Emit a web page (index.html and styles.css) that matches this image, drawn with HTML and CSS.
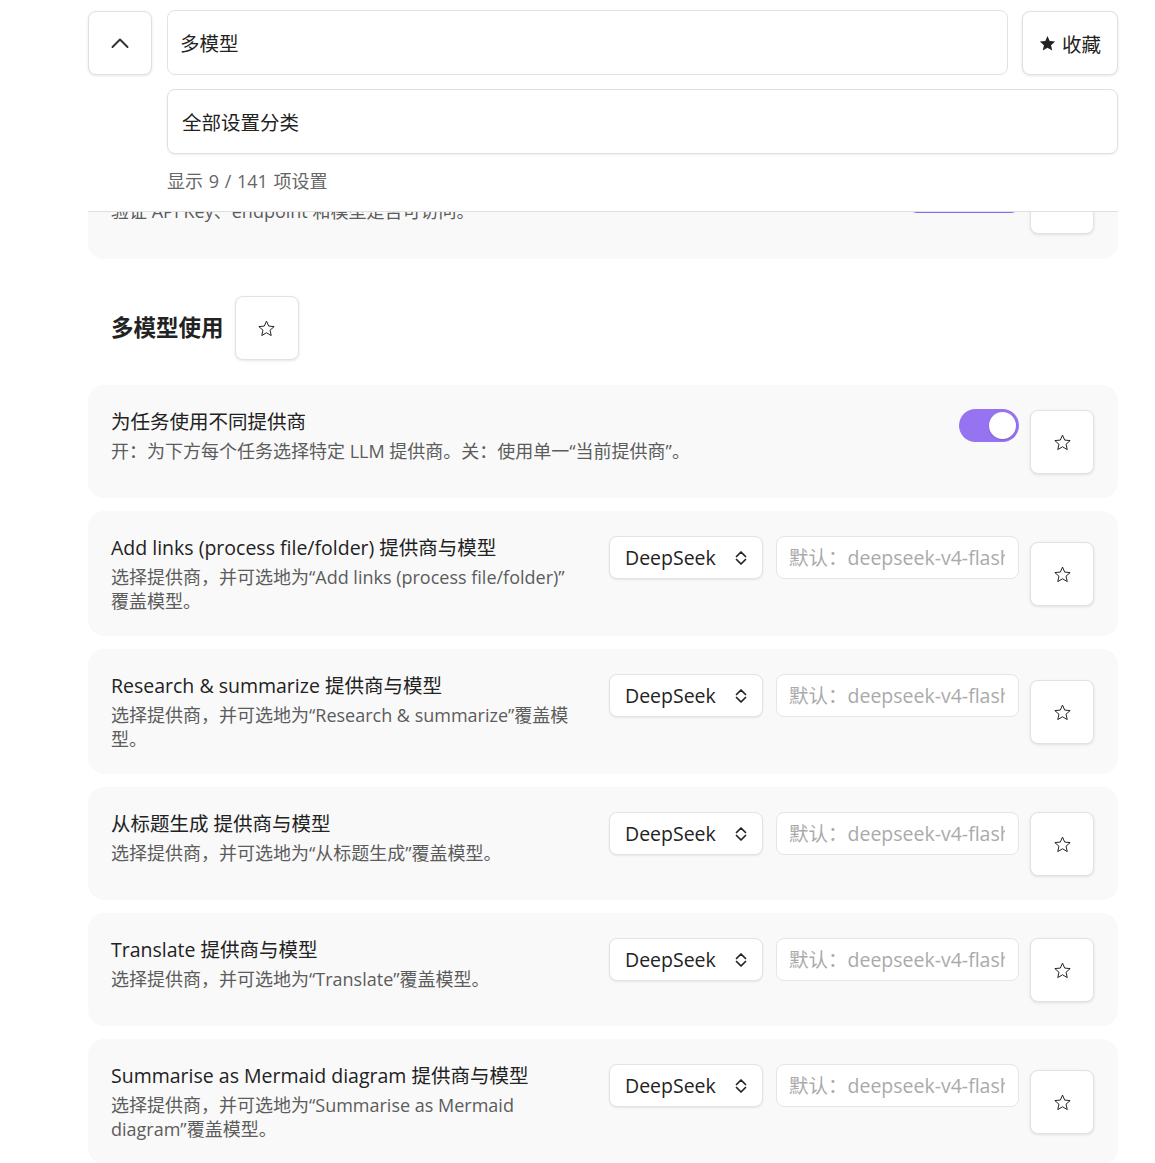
FILE: index.html
```html
<!DOCTYPE html>
<html lang="zh-CN">
<head>
  <meta charset="UTF-8">
  <title>设置</title>
  <link rel="stylesheet" href="styles.css">
</head>
<body>
  <div class="page">

    <div class="search-bar">
      <div class="search-row">
        <button class="up-btn">
          <svg width="24" height="24" viewBox="0 0 24 24"><path d="M4.5 16 L12 8.5 L19.5 16" fill="none" stroke="#333" stroke-width="2" stroke-linecap="round" stroke-linejoin="round"/></svg>
        </button>
        <input class="search-input" type="text" value="多模型">
        <button class="fav-btn">
          <svg width="17" height="17" viewBox="0 0 24 24"><polygon points="12,1.5 15.1,8.6 22.8,9.3 17,14.4 18.7,22 12,18 5.3,22 7,14.4 1.2,9.3 8.9,8.6" fill="#222"/></svg>
          <span>收藏</span>
        </button>
      </div>
      <div class="category">全部设置分类</div>
      <div class="count">显示 9 / 141 项设置</div>
    </div>

    <!-- fila mig amagada sota la barra -->
    <div class="setting hidden-row">
      <div class="info">
        <div class="name">测试连接</div>
        <div class="desc">验证 API Key、endpoint 和模型是否可访问。</div>
      </div>
      <div class="controls">
        <button class="cta">测试连接</button>
      </div>
      <button class="star-btn"><svg width="17" height="17" viewBox="0 0 24 24"><polygon points="12,1.5 15.1,8.6 22.8,9.3 17,14.4 18.7,22 12,18 5.3,22 7,14.4 1.2,9.3 8.9,8.6" fill="none" stroke="#222" stroke-width="1.4" stroke-linejoin="round"/></svg></button>
    </div>

    <div class="section-heading">
      <h2>多模型使用</h2>
      <button class="star-btn"><svg width="17" height="17" viewBox="0 0 24 24"><polygon points="12,1.5 15.1,8.6 22.8,9.3 17,14.4 18.7,22 12,18 5.3,22 7,14.4 1.2,9.3 8.9,8.6" fill="none" stroke="#222" stroke-width="1.4" stroke-linejoin="round"/></svg></button>
    </div>

    <div class="setting">
      <div class="info">
        <div class="name">为任务使用不同提供商</div>
        <div class="desc">开：为下方每个任务选择特定 LLM 提供商。关：使用单一“当前提供商”。</div>
      </div>
      <div class="controls toggle-wrap">
        <div class="toggle on"><div class="knob"></div></div>
      </div>
      <button class="star-btn"><svg width="17" height="17" viewBox="0 0 24 24"><polygon points="12,1.5 15.1,8.6 22.8,9.3 17,14.4 18.7,22 12,18 5.3,22 7,14.4 1.2,9.3 8.9,8.6" fill="none" stroke="#222" stroke-width="1.4" stroke-linejoin="round"/></svg></button>
    </div>

    <div class="setting">
      <div class="info">
        <div class="name">Add links (process file/folder) 提供商与模型</div>
        <div class="desc">选择提供商，并可选地为“Add links (process file/folder)”覆盖模型。</div>
      </div>
      <div class="controls">
        <div class="dropdown"><span>DeepSeek</span><svg width="12" height="16" viewBox="0 0 12 16"><path d="M1.5 6.5 L6 2 L10.5 6.5 M1.5 9.5 L6 14 L10.5 9.5" fill="none" stroke="#222" stroke-width="1.7" stroke-linecap="round" stroke-linejoin="round"/></svg></div>
        <input class="model-input" type="text" placeholder="默认：deepseek-v4-flash">
      </div>
      <button class="star-btn"><svg width="17" height="17" viewBox="0 0 24 24"><polygon points="12,1.5 15.1,8.6 22.8,9.3 17,14.4 18.7,22 12,18 5.3,22 7,14.4 1.2,9.3 8.9,8.6" fill="none" stroke="#222" stroke-width="1.4" stroke-linejoin="round"/></svg></button>
    </div>

    <div class="setting">
      <div class="info">
        <div class="name">Research &amp; summarize 提供商与模型</div>
        <div class="desc">选择提供商，并可选地为“Research &amp; summarize”覆盖模型。</div>
      </div>
      <div class="controls">
        <div class="dropdown"><span>DeepSeek</span><svg width="12" height="16" viewBox="0 0 12 16"><path d="M1.5 6.5 L6 2 L10.5 6.5 M1.5 9.5 L6 14 L10.5 9.5" fill="none" stroke="#222" stroke-width="1.7" stroke-linecap="round" stroke-linejoin="round"/></svg></div>
        <input class="model-input" type="text" placeholder="默认：deepseek-v4-flash">
      </div>
      <button class="star-btn"><svg width="17" height="17" viewBox="0 0 24 24"><polygon points="12,1.5 15.1,8.6 22.8,9.3 17,14.4 18.7,22 12,18 5.3,22 7,14.4 1.2,9.3 8.9,8.6" fill="none" stroke="#222" stroke-width="1.4" stroke-linejoin="round"/></svg></button>
    </div>

    <div class="setting">
      <div class="info">
        <div class="name">从标题生成 提供商与模型</div>
        <div class="desc">选择提供商，并可选地为“从标题生成”覆盖模型。</div>
      </div>
      <div class="controls">
        <div class="dropdown"><span>DeepSeek</span><svg width="12" height="16" viewBox="0 0 12 16"><path d="M1.5 6.5 L6 2 L10.5 6.5 M1.5 9.5 L6 14 L10.5 9.5" fill="none" stroke="#222" stroke-width="1.7" stroke-linecap="round" stroke-linejoin="round"/></svg></div>
        <input class="model-input" type="text" placeholder="默认：deepseek-v4-flash">
      </div>
      <button class="star-btn"><svg width="17" height="17" viewBox="0 0 24 24"><polygon points="12,1.5 15.1,8.6 22.8,9.3 17,14.4 18.7,22 12,18 5.3,22 7,14.4 1.2,9.3 8.9,8.6" fill="none" stroke="#222" stroke-width="1.4" stroke-linejoin="round"/></svg></button>
    </div>

    <div class="setting">
      <div class="info">
        <div class="name">Translate 提供商与模型</div>
        <div class="desc">选择提供商，并可选地为“Translate”覆盖模型。</div>
      </div>
      <div class="controls">
        <div class="dropdown"><span>DeepSeek</span><svg width="12" height="16" viewBox="0 0 12 16"><path d="M1.5 6.5 L6 2 L10.5 6.5 M1.5 9.5 L6 14 L10.5 9.5" fill="none" stroke="#222" stroke-width="1.7" stroke-linecap="round" stroke-linejoin="round"/></svg></div>
        <input class="model-input" type="text" placeholder="默认：deepseek-v4-flash">
      </div>
      <button class="star-btn"><svg width="17" height="17" viewBox="0 0 24 24"><polygon points="12,1.5 15.1,8.6 22.8,9.3 17,14.4 18.7,22 12,18 5.3,22 7,14.4 1.2,9.3 8.9,8.6" fill="none" stroke="#222" stroke-width="1.4" stroke-linejoin="round"/></svg></button>
    </div>

    <div class="setting">
      <div class="info">
        <div class="name">Summarise as Mermaid diagram 提供商与模型</div>
        <div class="desc">选择提供商，并可选地为“Summarise as Mermaid diagram”覆盖模型。</div>
      </div>
      <div class="controls">
        <div class="dropdown"><span>DeepSeek</span><svg width="12" height="16" viewBox="0 0 12 16"><path d="M1.5 6.5 L6 2 L10.5 6.5 M1.5 9.5 L6 14 L10.5 9.5" fill="none" stroke="#222" stroke-width="1.7" stroke-linecap="round" stroke-linejoin="round"/></svg></div>
        <input class="model-input" type="text" placeholder="默认：deepseek-v4-flash">
      </div>
      <button class="star-btn"><svg width="17" height="17" viewBox="0 0 24 24"><polygon points="12,1.5 15.1,8.6 22.8,9.3 17,14.4 18.7,22 12,18 5.3,22 7,14.4 1.2,9.3 8.9,8.6" fill="none" stroke="#222" stroke-width="1.4" stroke-linejoin="round"/></svg></button>
    </div>

  </div>
</body>
</html>
```

FILE: styles.css
```css
body {
  margin: 0;
  background: #fff;
  color: #222;
  font-family: "Open Sans", "Noto Sans CJK SC", sans-serif;
}
.page {
  width: 1030px;
  margin-left: 88px;
}
button, input {
  font-family: inherit;
  color: inherit;
}

/* --------------- Barra de cerca ----------------- */

.search-bar {
  position: relative;
  z-index: 2;
  background: #fff;
  border-bottom: 1px solid #e0e0e0;
  padding: 10px 0 18px;
}
.search-row {
  display: flex;
  align-items: center;
  gap: 14px;
  height: 65px;
}
.up-btn {
  width: 64px;
  height: 64px;
  margin-right: 1px;
  margin-top: 1px;
  display: flex;
  align-items: center;
  justify-content: center;
  background: #fff;
  border: 1px solid #e0e0e0;
  border-radius: 8px;
  box-shadow: 0 1px 3px rgba(0,0,0,0.1);
}
.search-input {
  flex: 1;
  min-width: 0;
  height: 65px;
  box-sizing: border-box;
  padding: 0 12px;
  font-size: 19.5px;
  border: 1px solid #e2e2e2;
  border-radius: 8px;
  outline: none;
}
.fav-btn {
  width: 96px;
  height: 64px;
  margin-top: 1px;
  display: flex;
  align-items: center;
  justify-content: center;
  gap: 6px;
  font-size: 19.5px;
  background: #fff;
  border: 1px solid #e0e0e0;
  border-radius: 8px;
  box-shadow: 0 1px 3px rgba(0,0,0,0.1);
}
.category {
  margin: 14px 0 0 79px;
  height: 65px;
  box-sizing: border-box;
  padding: 0 14px;
  display: flex;
  align-items: center;
  font-size: 19.5px;
  border: 1px solid #e0e0e0;
  border-radius: 8px;
  box-shadow: 0 1px 2px rgba(0,0,0,0.08);
}
.count {
  margin: 15px 0 0 79px;
  font-size: 18px;
  line-height: 24px;
  color: #666;
  word-spacing: 1px;
}

/* --------------- Files ----------------- */

.setting {
  display: flex;
  align-items: flex-start;
  background: #f9f9f9;
  border-radius: 16px;
  padding: 24px 24px 23px 23px;
}
.setting + .setting {
  margin-top: 13px;
}
.hidden-row {
  margin-top: -67px;
  padding-bottom: 24px;
}
.info {
  flex: 1;
  min-width: 0;
  padding-right: 34px;
}
.name {
  font-size: 19.5px;
  line-height: 26px;
  color: #222;
}
.desc {
  margin-top: 4px;
  font-size: 18px;
  line-height: 24px;
  color: #5c5c5c;
}
.controls {
  display: flex;
  align-items: flex-start;
  gap: 13px;
  padding-top: 1px;
}
.toggle-wrap {
  padding-top: 0;
}
.star-btn {
  align-self: center;
  flex: none;
  width: 64px;
  height: 64px;
  margin: 1px 0 1px 11px;
  display: flex;
  align-items: center;
  justify-content: center;
  background: #fff;
  border: 1px solid #e2e2e2;
  border-radius: 8px;
  box-shadow: 0 1px 3px rgba(0,0,0,0.1);
}

.section-heading {
  display: flex;
  align-items: center;
  gap: 11px;
  padding-left: 23px;
  margin: 37px 0 25px;
}
.section-heading h2 {
  margin: 0;
  font-size: 22.5px;
  font-weight: 700;
  line-height: 30px;
}
.section-heading .star-btn {
  margin: 0;
}

/* --------------- Controls ----------------- */

.cta {
  width: 110px;
  height: 43px;
  border: none;
  border-radius: 8px;
  background: #8b6cef;
  color: #fff;
  font-size: 18px;
}
.toggle {
  width: 60px;
  height: 33px;
  box-sizing: border-box;
  padding: 3px;
  border-radius: 17px;
  background: #9673f0;
  display: flex;
  justify-content: flex-end;
}
.knob {
  width: 27px;
  height: 27px;
  border-radius: 50%;
  background: #fff;
  box-shadow: 0 1px 2px rgba(0,0,0,0.15);
}
.dropdown {
  width: 154px;
  height: 43px;
  box-sizing: border-box;
  padding: 0 15px 0 15px;
  display: flex;
  align-items: center;
  justify-content: space-between;
  background: #fff;
  border: 1px solid #e3e3e3;
  border-radius: 8px;
  box-shadow: 0 1px 2px rgba(0,0,0,0.08);
  font-size: 19.5px;
}
.model-input {
  width: 243px;
  height: 43px;
  box-sizing: border-box;
  padding: 0 13px 0 12px;
  font-size: 19.5px;
  background: #fff;
  border: 1px solid #e6e6e6;
  border-radius: 8px;
  outline: none;
}
.model-input::placeholder {
  color: #aaa;
}
```
